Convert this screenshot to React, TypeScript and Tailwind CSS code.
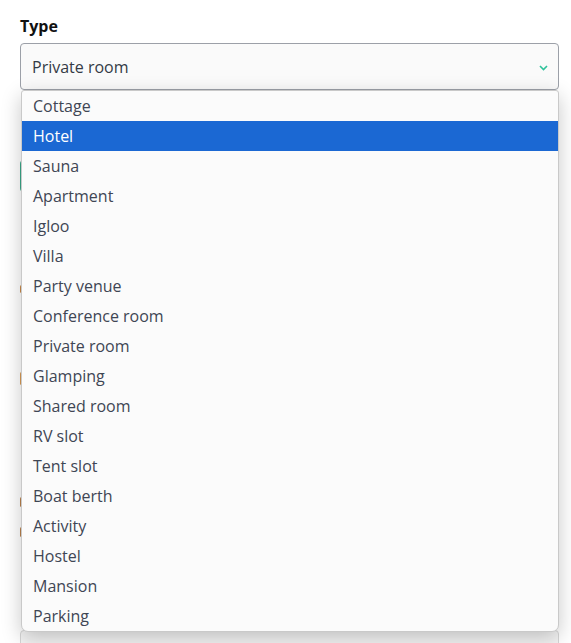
import React, { useState } from "react";

const TYPES = [
  "Cottage", "Hotel", "Sauna", "Apartment", "Igloo", "Villa", "Party venue",
  "Conference room", "Private room", "Glamping", "Shared room", "RV slot",
  "Tent slot", "Boat berth", "Activity", "Hostel", "Mansion", "Parking",
];

const font = { fontFamily: "'Open Sans', 'Liberation Sans', sans-serif" };

export default function App() {
  const [value] = useState("Private room");
  const [hover, setHover] = useState("Hotel");

  return (
    <div className="h-screen overflow-hidden bg-white pl-5 pr-3 pt-[17px]" style={font}>
      <label className="block text-[16px] font-bold leading-[18px] text-[#111]">Type</label>

      <div className="relative mt-[8px]">
        {/* select */}
        <div className="flex h-[47px] items-center justify-between rounded-[4px] border border-[#9ca0a8] bg-[#fafafa] pl-[11px] pr-[10px]">
          <span className="text-[16px] text-[#343a46]">{value}</span>
          <svg width="9" height="6" viewBox="0 0 9 6" className="mt-[2px]">
            <path d="M1 1l3.5 3.5L8 1" fill="none" stroke="#2fc29b" strokeWidth="1.6" />
          </svg>
        </div>

        {/* form content under the open list */}
        <div className="flex flex-col">
          <div className="mt-[70px] h-[32px] w-[160px] rounded-[4px] border-l-2 border-[#3aa98a] bg-[#e9f6f1]" />
          <div className="mt-[93px] flex items-start gap-2">
            <span className="h-[8px] w-[3px] rounded-full bg-[#c98a4a]" />
            <div className="h-[38px] flex-1 rounded-[4px] border border-[#9ca0a8]" />
          </div>
          <div className="mt-[49px] flex items-start gap-2">
            <span className="h-[13px] w-[3px] rounded-full bg-[#d89a55]" />
            <div className="h-[97px] flex-1 rounded-[4px] border border-[#9ca0a8]" />
          </div>
          <span className="mt-[28px] h-[10px] w-[3px] rounded-full bg-[#b9824d]" />
          <span className="mt-[20px] h-[10px] w-[3px] rounded-full bg-[#b9824d]" />
          <div className="mt-[93px] h-[40px] rounded-[4px] border border-[#d6d6d6] bg-[#f4f4f4]" />
        </div>

        {/* dropdown */}
        <ul className="absolute left-px right-0 top-[47px] z-10 overflow-hidden rounded-b-[7px] rounded-t-[3px] border border-[#c9c9c9] bg-[#fbfbfb] shadow-[0_6px_20px_rgba(0,0,0,0.22)]">
          {TYPES.map((t) => (
            <li
              key={t}
              onMouseEnter={() => setHover(t)}
              className={
                "flex h-[30px] items-center pl-[11px] text-[16px] " +
                (t === hover ? "bg-[#1b68d3] text-white" : "text-[#3f4654]")
              }
            >
              {t}
            </li>
          ))}
        </ul>
      </div>
    </div>
  );
}
